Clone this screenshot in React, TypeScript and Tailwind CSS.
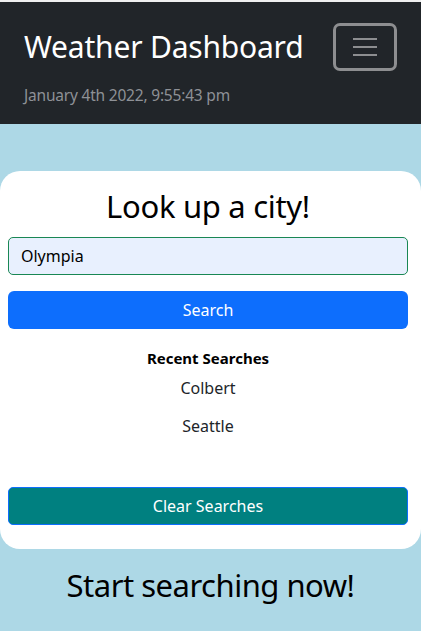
import React from 'react';

const recent = ['Colbert', 'Seattle'];

const font = { fontFamily: '"Noto Sans", "Open Sans", sans-serif' };

const App: React.FC = () => {
  return (
    <div className="min-h-[631px] bg-[#ADD8E6] font-['Noto_Sans',sans-serif]">
      <div className="h-[2px] bg-[#f0f0f0]" />
      <nav className="flex h-[122px] flex-col bg-[#212529] px-6">
        <div className="mt-[21px] flex h-12 items-center justify-between">
          <h1 className="text-[30px] font-normal leading-none tracking-[-0.2px] text-white">Weather Dashboard</h1>
          <button className="flex h-12 w-16 flex-col items-center justify-center gap-[6px] rounded-[7px] border-[3px] border-[#8d8e90]">
            <span className="block h-[2px] w-6 bg-[#8d8e90]" />
            <span className="block h-[2px] w-6 bg-[#8d8e90]" />
            <span className="block h-[2px] w-6 bg-[#8d8e90]" />
          </button>
        </div>
        <p className="mt-[14px] text-[15.5px] leading-5 tracking-[-0.2px] text-[#8e9196]">January 4th 2022, 9:55:43 pm</p>
      </nav>

      <section className="mt-[47px] flex flex-col rounded-[20px] bg-white pb-6 pl-2 pr-[13px] pt-[15px]">
        <h2 className="text-center text-[31px] leading-[40px] tracking-[-0.3px] text-black">Look up a city!</h2>
        <input
          readOnly
          value="Olympia"
          className="mt-[11px] h-[38px] w-full rounded-[5px] border border-[#198754] bg-[#e8f0fe] px-3 text-[16px] text-black outline-none"
          style={font}
        />
        <button className="mt-4 h-[38px] rounded-[6px] bg-[#0d6efd] text-[16px] text-white">Search</button>

        <h3 className="mt-[19px] text-center text-[15px] font-bold leading-5 text-black">Recent Searches</h3>
        <ul className="mt-[8px] flex flex-col items-center">
          {recent.map((city) => (
            <li key={city} className="h-[38px] text-[16px] leading-6 text-[#212529]">{city}</li>
          ))}
        </ul>

        <button className="mt-[35px] h-[38px] rounded-[5px] border border-[#0d6efd] bg-[#008080] text-[16px] text-white">
          Clear Searches
        </button>
      </section>

      <h2 className="mt-[16px] pb-6 text-center text-[31px] leading-[40px] tracking-[-0.5px] text-black">Start searching now!</h2>
    </div>
  );
};

export default App;
